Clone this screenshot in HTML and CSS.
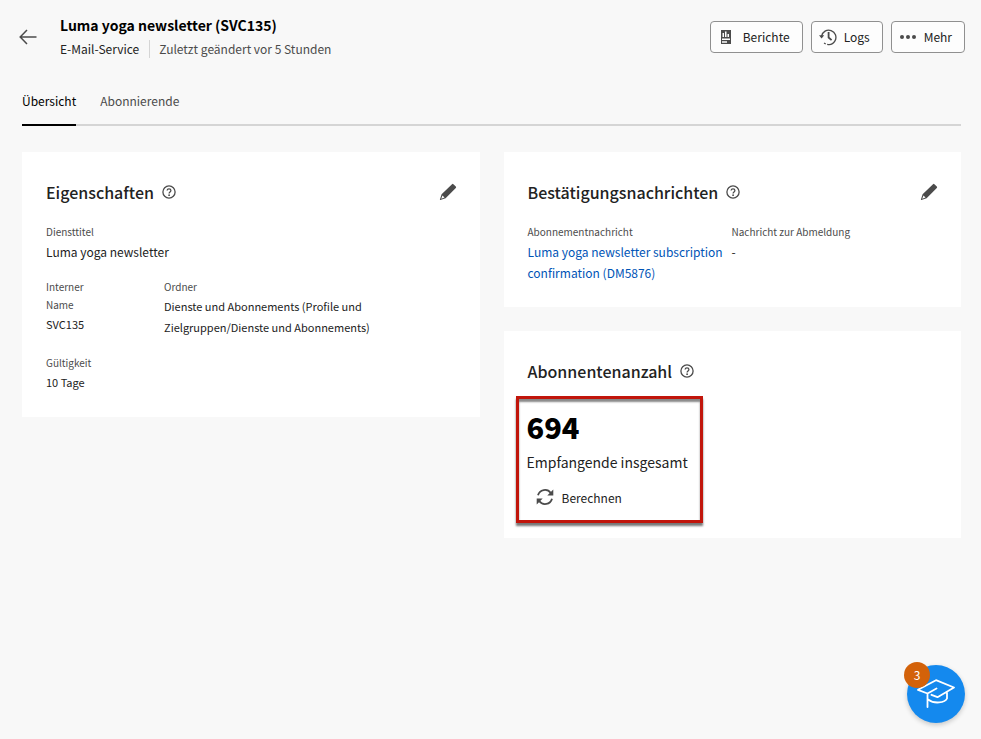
FILE: index.html
```html
<!DOCTYPE html>
<html lang="de">
<head>
<meta charset="utf-8">
<meta name="viewport" content="width=device-width, initial-scale=1">
<title>Luma yoga newsletter (SVC135)</title>
<link rel="stylesheet" href="styles.css">
</head>
<body>
<svg class="defs" aria-hidden="true">
  <symbol id="help" viewBox="0 0 14 14">
    <circle cx="7" cy="7" r="6.1" fill="none" stroke="currentColor" stroke-width="1.3"/>
    <path d="M5.1 5.5C5.2 4.3 6 3.8 7 3.8c1.100 0 1.900.6 1.900 1.600 0 1.500-1.800 1.500-1.800 3" fill="none" stroke="currentColor" stroke-width="1.300"/>
    <circle cx="7.100" cy="10.200" r=".9" fill="currentColor"/>
  </symbol>
  <symbol id="pencil" viewBox="0 0 18 18">
    <path fill="currentColor" fill-rule="evenodd" d="M13 1.200a1 1 0 0 1 1.400 0l2.400 2.400a1 1 0 0 1 0 1.400L6.600 15.200l-5.300 1.700a.3.3 0 0 1-.4-.4l1.700-5.300zM3.500 12.400l-1.300 3.300 3.300-1.200z"/>
  </symbol>
</svg>
<header class="header">
  <button class="back" aria-label="Zurück">
    <svg width="18" height="16" viewBox="0 0 18 16" fill="none" stroke="#4b4b4b" stroke-width="1.500"><path d="M17.500 8H1.500M8 1L1.200 8L8 15"/></svg>
  </button>
  <div class="heading">
    <h1>Luma yoga newsletter (SVC135)</h1>
    <p class="meta"><span class="kind">E-Mail-Service</span><span class="changed">Zuletzt geändert vor 5 Stunden</span></p>
  </div>
  <div class="actions">
    <button class="action">
      <svg width="18" height="18" viewBox="0 0 18 18"><path fill="#4b4b4b" fill-rule="evenodd" d="M3 2h10v14H3zM4.500 5v4H6V5zM7 3.500V9h1.500V3.500zM9.500 6v3H11V6zM4 10.500V12h8v-1.500zM4 13.300v1.400h5v-1.400z"/></svg>
      Berichte
    </button>
    <button class="action">
      <svg width="18" height="18" viewBox="0 0 18 18" fill="none" stroke="#4b4b4b"><path stroke-width="1.300" d="M2.600 8.200A7.200 7.200 0 1 1 5.100 14.900" stroke-dasharray="34 1.500 3 1.500"/><path fill="#4b4b4b" stroke="none" d="M0 7.200h5.200L2.600 10.400z"/><path stroke-width="1.800" d="M9.600 4v5.500l3 2.600"/></svg>
      Logs
    </button>
    <button class="action">
      <svg width="18" height="18" viewBox="0 0 18 18" fill="#4b4b4b"><circle cx="3" cy="9" r="2"/><circle cx="9" cy="9" r="2"/><circle cx="15" cy="9" r="2"/></svg>
      Mehr
    </button>
  </div>
</header>
<nav class="tabs" aria-label="Ansichten">
  <a class="tab active" href="#overview" aria-current="page">Übersicht</a>
  <a class="tab" href="#subscribers">Abonnierende</a>
</nav>
<main class="board" id="overview">
  <section class="card">
    <div class="card-head">
      <h2>Eigenschaften</h2>
      <button class="icon" aria-label="Hilfe"><svg width="14" height="14"><use href="#help"/></svg></button>
      <button class="icon edit" aria-label="Bearbeiten"><svg width="18" height="18"><use href="#pencil"/></svg></button>
    </div>
    <dl class="fields properties">
      <div class="wide"><dt>Diensttitel</dt><dd>Luma yoga newsletter</dd></div>
      <div><dt>Interner<br>Name</dt><dd class="compact">SVC135</dd></div>
      <div><dt>Ordner</dt><dd class="compact">Dienste und Abonnements (Profile und Zielgruppen/Dienste und Abonnements)</dd></div>
      <div><dt>Gültigkeit</dt><dd class="compact">10 Tage</dd></div>
    </dl>
  </section>
  <div class="column">
    <section class="card">
      <div class="card-head">
        <h2>Bestätigungsnachrichten</h2>
        <button class="icon" aria-label="Hilfe"><svg width="14" height="14"><use href="#help"/></svg></button>
        <button class="icon edit" aria-label="Bearbeiten"><svg width="18" height="18"><use href="#pencil"/></svg></button>
      </div>
      <dl class="fields messages">
        <div><dt>Abonnementnachricht</dt><dd><a href="#message">Luma yoga newsletter subscription confirmation (DM5876)</a></dd></div>
        <div><dt>Nachricht zur Abmeldung</dt><dd>-</dd></div>
      </dl>
    </section>
    <section class="card count-card">
      <div class="card-head">
        <h2>Abonnentenanzahl</h2>
        <button class="icon" aria-label="Hilfe"><svg width="14" height="14"><use href="#help"/></svg></button>
      </div>
      <div class="highlight">
        <p class="count">694</p>
        <p class="caption">Empfangende insgesamt</p>
        <button class="calculate">
          <svg width="18" height="18" viewBox="0 0 18 18"><g fill="none" stroke="#4b4b4b" stroke-width="1.800"><path d="M2 7.300A7.200 7.200 0 0 1 14.800 5"/><path d="M16 10.700A7.200 7.200 0 0 1 3.200 13"/></g><path fill="#4b4b4b" d="M17.300 1.500v6h-6zM.7 16.500v-6h6z"/></svg>
          Berechnen
        </button>
      </div>
    </section>
  </div>
</main>
<button class="learn" aria-label="Lernen">
  <svg width="38" height="30" viewBox="0 0 38 30" fill="none" stroke="#fff" stroke-width="1.800" stroke-linejoin="round" stroke-linecap="round"><path d="M10.500 28V14.500L19.500 9.500M10.500 14.500L1 10.800L19 1.200L37 8.500L20.500 18.200L14.500 15.800M11.500 20.800C17 25 28 24 30 19.500V13.500"/></svg>
  <span class="badge">3</span>
</button>
</body>
</html>
```
FILE: styles.css
```css
* { box-sizing: border-box; }
body {
  margin: 0;
  background: #f8f8f8;
  color: #222;
  font: 12px/21px "Noto Sans CJK SC", "Open Sans", sans-serif;
}
h1, h2, p, dl, dd { margin: 0; }
a { color: #0054b6; text-decoration: none; }
button {
  font: inherit;
  color: inherit;
  background: none;
  border: 0;
  padding: 0;
  cursor: pointer;
}
svg { display: block; flex: none; }
.defs { position: absolute; width: 0; height: 0; }

.header {
  display: flex;
  align-items: center;
  padding: 13px 16px 0 18px;
}
.back {
  display: grid;
  place-items: center;
  width: 20px;
  height: 32px;
  margin-right: 22px;
}
.heading { flex: 1; }
h1 {
  font-size: 14px;
  line-height: 24px;
  font-weight: 700;
  color: #000;
}
.meta { display: flex; align-items: center; line-height: 24px; }
.kind { padding-right: 10px; }
.changed {
  padding-left: 9px;
  border-left: 1px solid #d5d5d5;
  color: #4b4b4b;
  line-height: 18px;
}
.actions { display: flex; gap: 8px; }
.action {
  display: flex;
  align-items: center;
  gap: 7px;
  height: 32px;
  padding: 0 12px 0 7px;
  line-height: 20px;
  background: #fdfdfd;
  border: 1px solid #909090;
  border-radius: 4px;
}

.tabs {
  display: flex;
  gap: 24px;
  margin: 15px 20px 0 22px;
  border-bottom: 2px solid #d5d5d5;
}
.tab {
  padding: 14px 0 13px;
  margin-bottom: -2px;
  border-bottom: 2px solid transparent;
  color: #4b4b4b;
}
.tab.active { color: #000; border-color: #000; }

.board {
  display: grid;
  grid-template-columns: 1fr 1fr;
  gap: 24px;
  align-items: start;
  padding: 26px 20px 0 22px;
}
.column { display: grid; gap: 24px; }
.card { background: #fff; padding: 24px; }
.card-head {
  display: flex;
  align-items: center;
  gap: 8px;
  height: 32px;
}
h2 { font-size: 16px; line-height: 22px; font-weight: 500; }
.icon { color: #4b4b4b; }
.edit { margin-left: auto; margin-right: -1px; }

.fields { display: grid; gap: 16px 0; margin-top: 15px; }
.properties { grid-template-columns: 64px 240px; column-gap: 54px; }
.messages { grid-template-columns: 204px 1fr; }
.wide { grid-column: 1 / -1; }
dt { font-size: 10px; line-height: 18px; color: #4b4b4b; }
.compact { font-size: 11px; }

.count-card { padding-bottom: 15px; }
.highlight {
  width: fit-content;
  margin: 9px 0 0 -12px;
  padding: 7px 12px 7px 8px;
  border: 3px solid #c1150b;
  box-shadow: 0 3px 2px #777, inset 0 3px 2px #888;
}
.count { font-size: 29px; line-height: 40px; font-weight: 900; color: #000; }
.caption { margin-top: 4px; font-size: 14px; line-height: 24px; }
.calculate {
  display: flex;
  align-items: center;
  gap: 8px;
  height: 32px;
  margin-top: 7px;
  padding: 0 9px;
}

.learn {
  position: fixed;
  right: 16px;
  bottom: 16px;
  display: grid;
  place-items: center;
  width: 58px;
  height: 58px;
  border-radius: 50%;
  background: #1489ee;
  box-shadow: 0 2px 5px #0003;
}
.badge {
  position: absolute;
  top: -3px;
  left: -3px;
  width: 26px;
  height: 26px;
  border-radius: 50%;
  background: #d3620a;
  color: #fff;
  line-height: 26px;
  text-align: center;
}
```
